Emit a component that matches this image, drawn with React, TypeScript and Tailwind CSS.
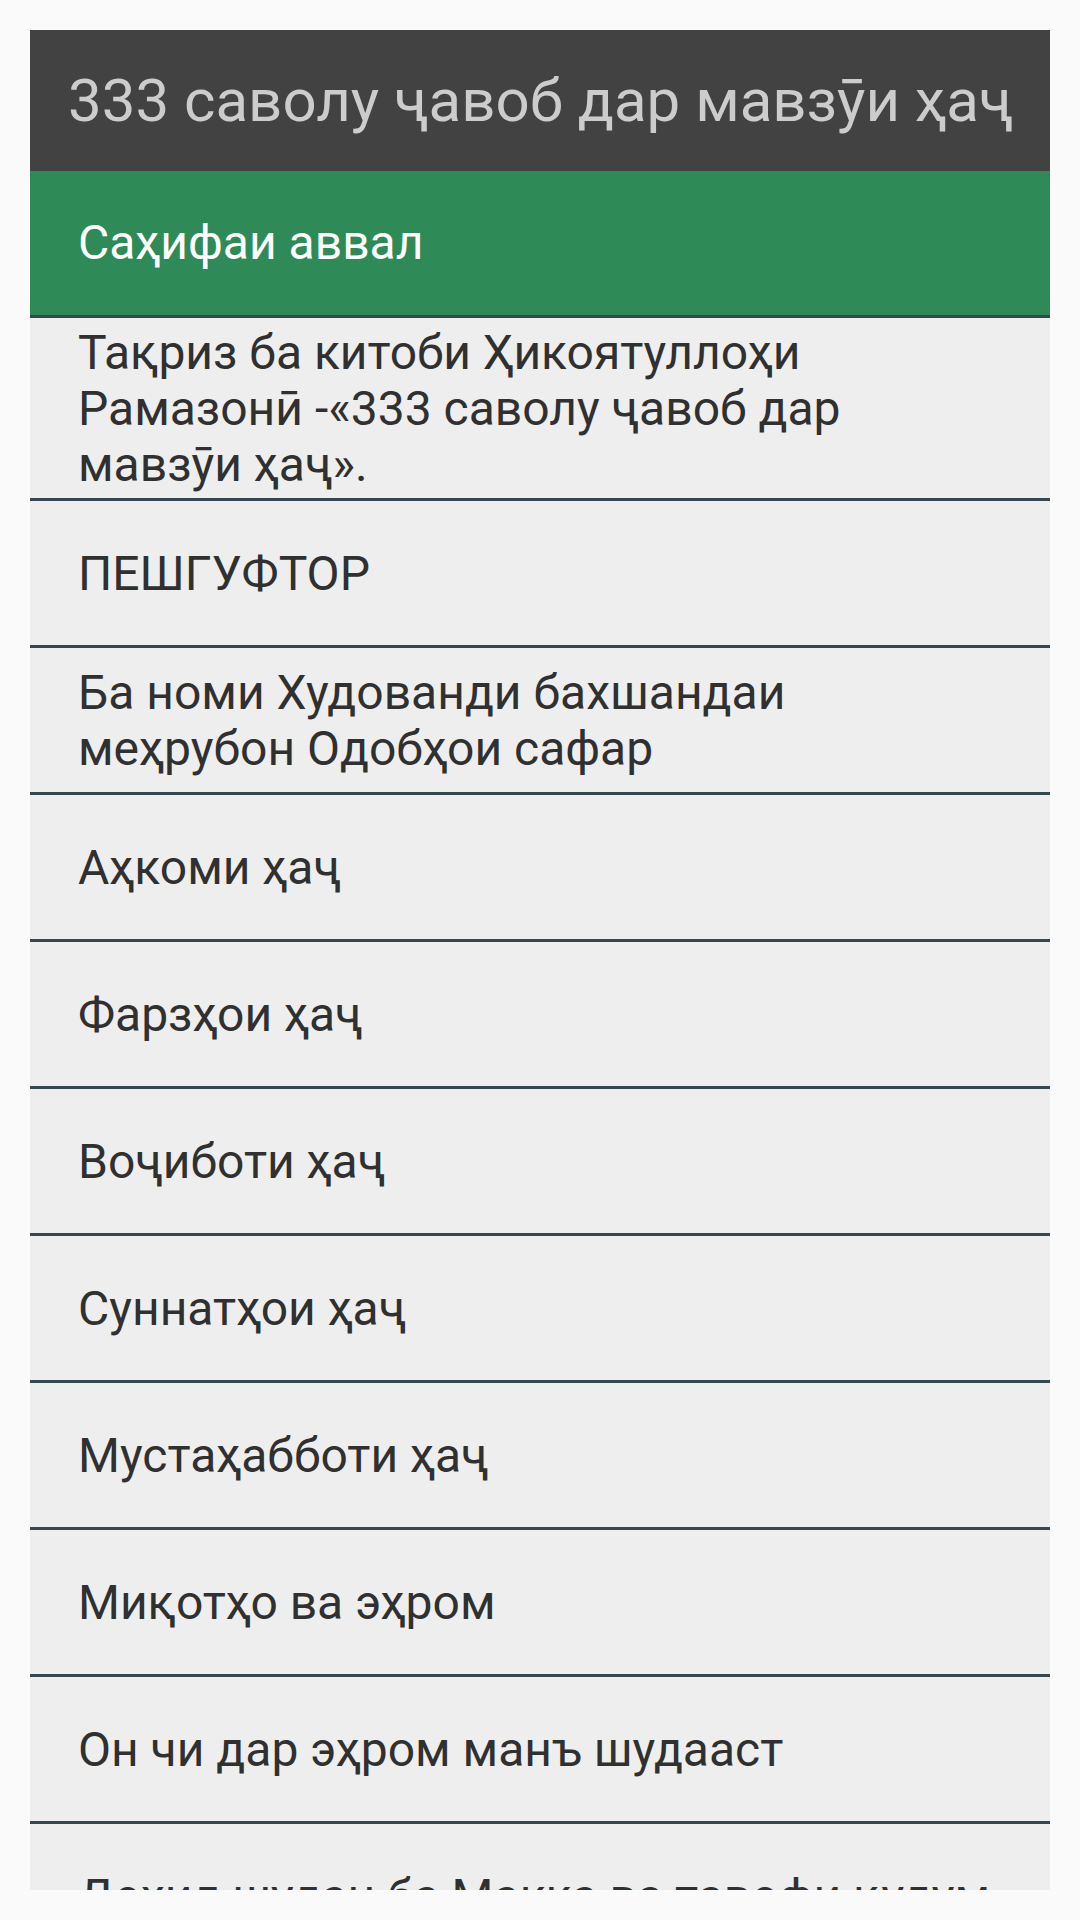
const ITEMS: string[] = [
  "Тақриз ба китоби Ҳикоятуллоҳи Рамазонӣ -«333 саволу ҷавоб дар мавзӯи ҳаҷ».",
  "ПЕШГУФТОР",
  "Ба номи Худованди бахшандаи меҳрубон Одобҳои сафар",
  "Аҳкоми ҳаҷ",
  "Фарзҳои ҳаҷ",
  "Воҷиботи ҳаҷ",
  "Суннатҳои ҳаҷ",
  "Мустаҳабботи ҳаҷ",
  "Миқотҳо ва эҳром",
  "Он чи дар эҳром манъ шудааст",
  "Дохил шудан ба Макка ва тавофи қудум",
];

function Row({ text }: { text: string }) {
  return (
    <div className="border-t-[3px] border-[#37474f] bg-[#eeeeee]">
      <div className="min-h-[144px] flex items-center px-[48px] pt-[7px] pb-[5px] text-[48px] leading-[56px] text-[#303030]">
        {text}
      </div>
    </div>
  );
}

export default function App() {
  return (
    <div
      className="w-[1080px] h-[1920px] bg-[#fafafa] p-[30px]"
      style={{ fontFamily: "Roboto, 'Noto Sans', sans-serif" }}
    >
      <div className="h-full overflow-hidden flex flex-col">
        <div className="h-[141px] shrink-0 bg-[#424242] flex items-center px-[38px]">
          <h1 className="text-[60px] text-[#cccccc] whitespace-nowrap overflow-hidden">
            333 саволу ҷавоб дар мавзӯи ҳаҷ
          </h1>
        </div>
        <div className="h-[144px] shrink-0 bg-[#2e8b57] flex items-center px-[48px] text-[48px] text-white">
          Саҳифаи аввал
        </div>
        {ITEMS.map((t) => (
          <div key={t} className="shrink-0">
            <Row text={t} />
          </div>
        ))}
      </div>
    </div>
  );
}
